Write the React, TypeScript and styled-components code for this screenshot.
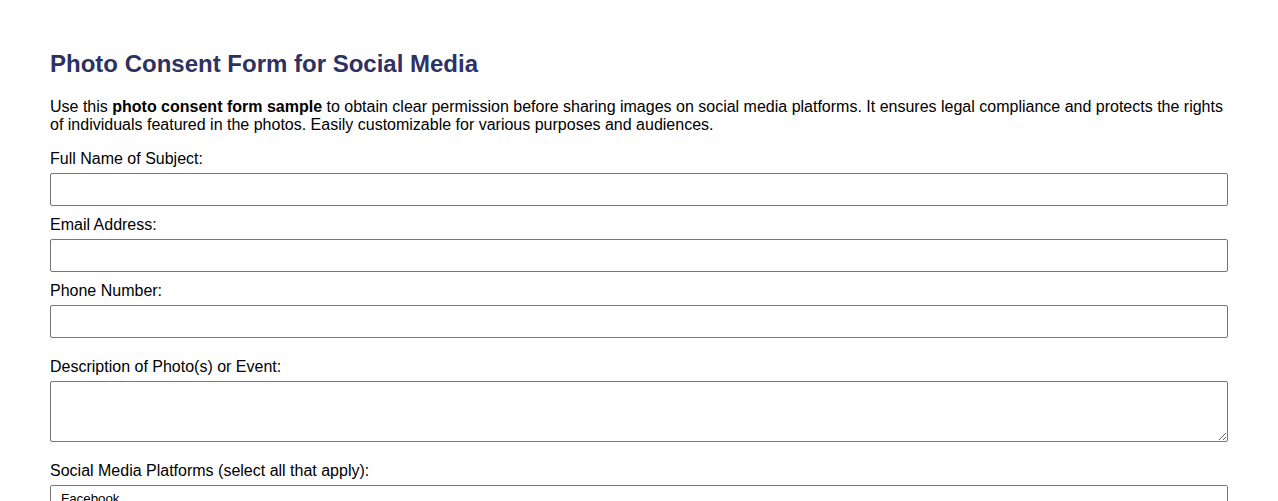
import React from 'react';
import styled, { createGlobalStyle } from 'styled-components';

const GlobalStyle = createGlobalStyle`
  html, body {
    margin: 0;
    padding: 0;
    background: #ffffff;
  }
  body {
    font-family: "Liberation Sans", Arial, sans-serif;
    color: #000000;
  }
`;

const Page = styled.main`
  padding: 50px 50px 40px;
`;

const Title = styled.h2`
  margin: 0;
  font-size: 24px;
  font-weight: 700;
  color: #2e3164;
`;

const Intro = styled.p`
  margin: 20px 0 15px;
  font-size: 16px;
  line-height: 18.4px;
`;

const Field = styled.div<{ $spaced?: boolean }>`
  margin-top: ${(p) => (p.$spaced ? '20px' : '0')};
  margin-bottom: 10px;
`;

const Label = styled.label`
  display: block;
  font-size: 16px;
  line-height: 18px;
  margin-bottom: 5px;
`;

const TextInput = styled.input`
  display: block;
  box-sizing: border-box;
  width: 100%;
  height: 33px;
  margin: 0;
  padding: 6px 8px;
  border: 1px solid #767676;
  border-radius: 2px;
  font: 16px "Liberation Sans", Arial, sans-serif;
`;

const TextArea = styled.textarea`
  display: block;
  box-sizing: border-box;
  width: 100%;
  height: 61px;
  margin: 0;
  padding: 6px 8px;
  border: 1px solid #767676;
  border-radius: 2px;
  font: 16px "Liberation Sans", Arial, sans-serif;
`;

const MultiSelect = styled.select`
  display: block;
  box-sizing: border-box;
  width: 100%;
  height: 80px;
  margin: 1px 0 0;
  padding: 5px 8px;
  border: 1px solid #767676;
  border-radius: 2px;
  font: 13.33px "Liberation Sans", Arial, sans-serif;
`;

const platforms = ['Facebook', 'Instagram', 'Twitter / X', 'LinkedIn', 'TikTok', 'YouTube', 'Other'];

export default function App() {
  return (
    <>
      <GlobalStyle />
      <Page>
        <Title>Photo Consent Form for Social Media</Title>
        <Intro>
          Use this <strong>photo consent form sample</strong> to obtain clear permission before sharing
          images on social media platforms. It ensures legal compliance and protects the rights of
          individuals featured in the photos. Easily customizable for various purposes and audiences.
        </Intro>
        <form>
          <Field>
            <Label htmlFor="fullName">Full Name of Subject:</Label>
            <TextInput id="fullName" type="text" />
          </Field>
          <Field>
            <Label htmlFor="email">Email Address:</Label>
            <TextInput id="email" type="email" />
          </Field>
          <Field>
            <Label htmlFor="phone">Phone Number:</Label>
            <TextInput id="phone" type="tel" />
          </Field>
          <Field $spaced>
            <Label htmlFor="description">Description of Photo(s) or Event:</Label>
            <TextArea id="description" />
          </Field>
          <Field $spaced>
            <Label htmlFor="platforms">Social Media Platforms (select all that apply):</Label>
            <MultiSelect id="platforms" multiple>
              {platforms.map((p) => (
                <option key={p} value={p}>
                  {p}
                </option>
              ))}
            </MultiSelect>
          </Field>
        </form>
      </Page>
    </>
  );
}
